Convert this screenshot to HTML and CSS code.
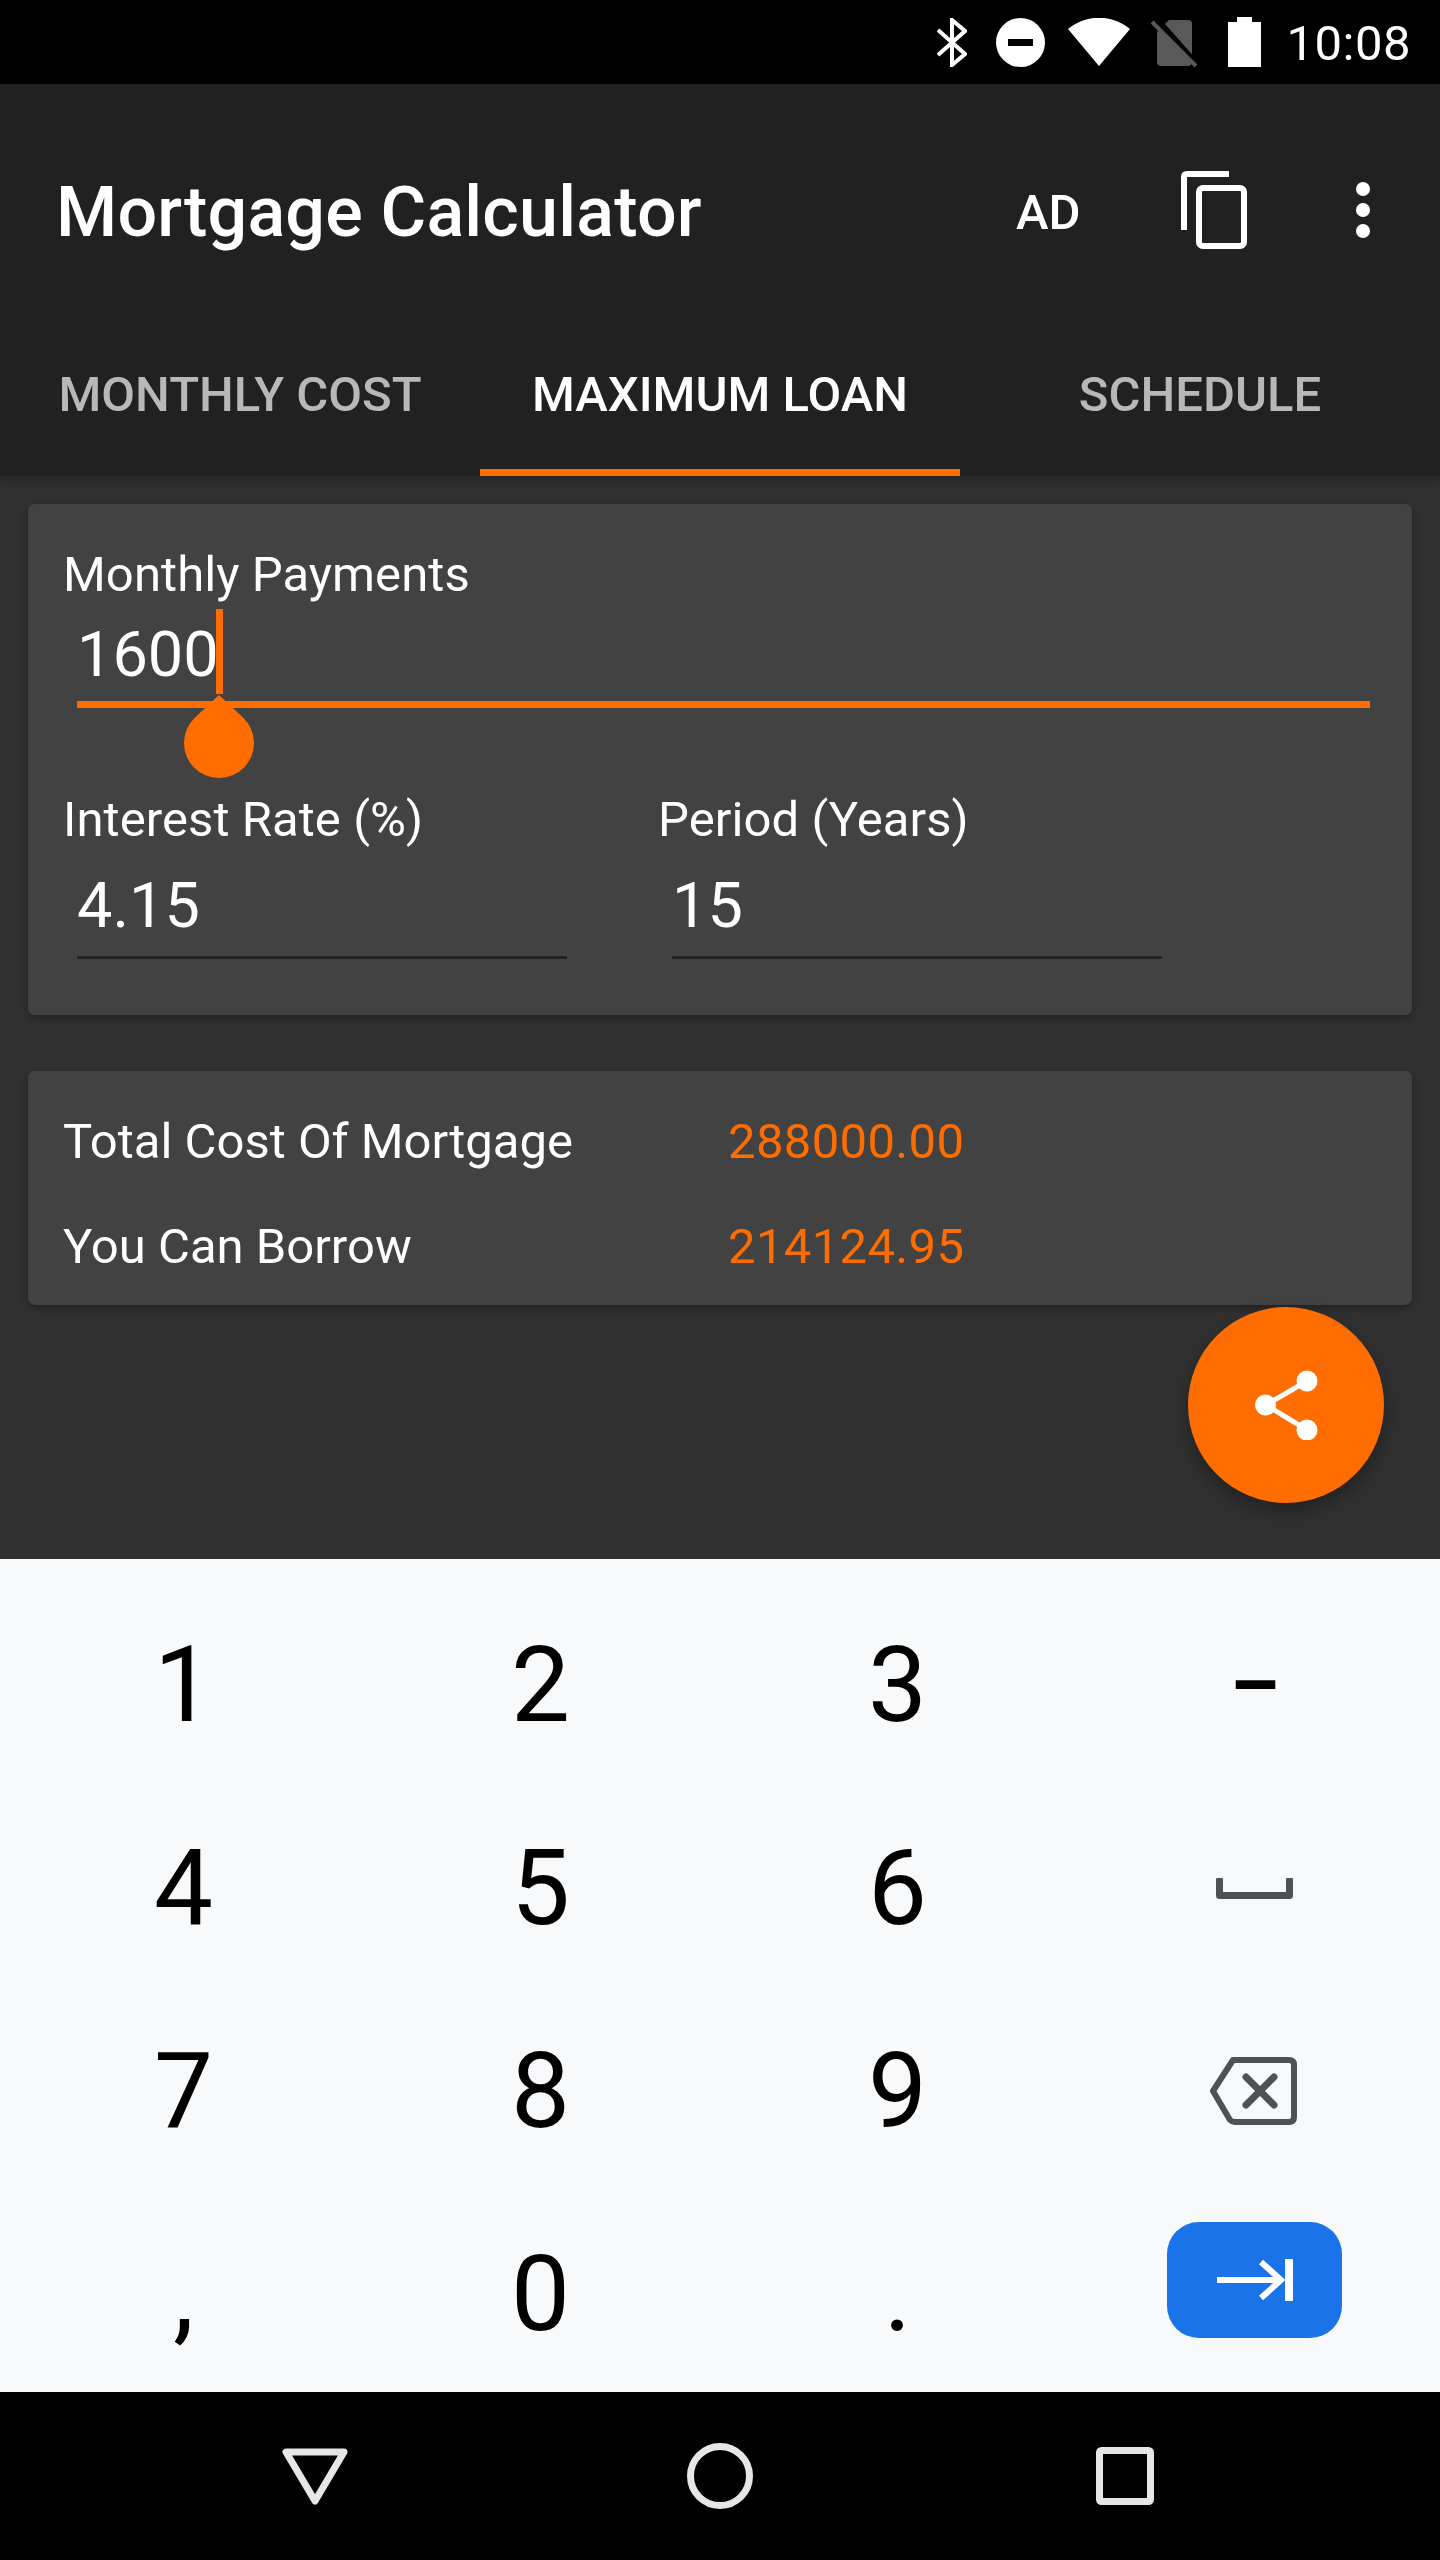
FILE: index.html
```html
<!DOCTYPE html>
<html lang="en">
<head>
<meta charset="utf-8">
<title>Mortgage Calculator</title>
<link rel="stylesheet" href="styles.css">
</head>
<body>
<div class="screen">
  <header class="status">
    <svg class="st-bt" width="30" height="49" viewBox="0 0 30 49"><path d="M1 12 L28 36 L15 47 V2 L28 13 L1 37" fill="none" stroke="#fff" stroke-width="4"/></svg>
    <svg class="st-dnd" width="49" height="49" viewBox="0 0 49 49"><circle cx="24.5" cy="24.5" r="24.5" fill="#fff"/><rect x="12" y="21" width="25" height="7" fill="#000"/></svg>
    <svg class="st-wifi" width="62" height="48" viewBox="0 0 62 48"><path d="M0 11 C18 -4 44 -4 62 11 L31 48 Z" fill="#fff"/></svg>
    <svg class="st-sim" width="46" height="48" viewBox="0 0 46 48"><path d="M18 1 H37 Q41 1 41 5 V43 Q41 47 37 47 H10 Q6 47 6 43 V13 Z" fill="#595959"/><path d="M4 -1 L44 44" stroke="#000" stroke-width="7"/><path d="M1 3 L45 47" stroke="#595959" stroke-width="4"/></svg>
    <svg class="st-bat" width="33" height="50" viewBox="0 0 33 50"><path d="M9 0 H24 V5 H33 V50 H0 V5 H9 Z" fill="#fff"/></svg>
    <span class="clock">10:08</span>
  </header>

  <div class="appbar">
    <div class="toolbar">
      <h1 class="title">Mortgage Calculator</h1>
      <span class="ad">AD</span>
      <svg class="copy" width="66" height="78" viewBox="0 0 66 78"><path d="M48 3 H6 Q3 3 3 6 V59" fill="none" stroke="#fff" stroke-width="6"/><rect x="18" y="17" width="45" height="58" rx="4" fill="none" stroke="#fff" stroke-width="6"/></svg>
      <svg class="more" width="14" height="56" viewBox="0 0 14 56"><circle cx="7" cy="7" r="7" fill="#fff"/><circle cx="7" cy="28" r="7" fill="#fff"/><circle cx="7" cy="49" r="7" fill="#fff"/></svg>
    </div>
    <nav class="tabs">
      <span class="tab">MONTHLY COST</span>
      <span class="tab tab-on">MAXIMUM LOAN</span>
      <span class="tab">SCHEDULE</span>
    </nav>
  </div>

  <main class="main">
    <section class="card card-form">
      <div class="field">
        <div class="label">Monthly Payments</div>
        <div class="value value-main">1600<i class="caret"></i></div>
        <div class="rule rule-on"></div>
        <svg class="handle" width="70" height="83" viewBox="0 0 70 83"><path d="M35 0 L59 22.5 A35 35 0 1 1 11 22.5 Z" fill="#ff6d00"/></svg>
      </div>
      <div class="pair">
        <div class="field">
          <div class="label">Interest Rate (%)</div>
          <div class="value value-sub">4.15</div>
          <div class="rule"></div>
        </div>
        <div class="field">
          <div class="label">Period (Years)</div>
          <div class="value value-sub">15</div>
          <div class="rule"></div>
        </div>
      </div>
    </section>
    <section class="card card-result">
      <div class="row"><span class="row-name">Total Cost Of Mortgage</span><span class="row-val">288000.00</span></div>
      <div class="row"><span class="row-name">You Can Borrow</span><span class="row-val">214124.95</span></div>
    </section>
    <button class="fab" type="button" aria-label="Share">
      <svg width="63" height="70" viewBox="0 0 63 70"><path d="M52 11 L11 35 L52 60" fill="none" stroke="#fff" stroke-width="5"/><circle cx="52" cy="11" r="10.5" fill="#fff"/><circle cx="10.5" cy="35" r="10.5" fill="#fff"/><circle cx="52" cy="60" r="10.5" fill="#fff"/></svg>
    </button>
  </main>

  <section class="keyboard">
    <span class="key">1</span><span class="key">2</span><span class="key">3</span><span class="key key-minus">–</span>
    <span class="key">4</span><span class="key">5</span><span class="key">6</span>
    <span class="key"><svg width="77" height="21" viewBox="0 0 77 21"><path d="M3.5 2 V17.5 H73.5 V2" fill="none" stroke="#4f5153" stroke-width="7" stroke-linejoin="round" stroke-linecap="round"/></svg></span>
    <span class="key">7</span><span class="key">8</span><span class="key">9</span>
    <span class="key"><svg class="bksp" width="88" height="70" viewBox="0 0 88 70"><path d="M24 4 H80 Q85 4 85 9 V61 Q85 66 80 66 H26 Q23 66 21 64 L4 35 Z" fill="none" stroke="#4f5153" stroke-width="6" stroke-linejoin="round"/><path d="M37 21 L65 49 M65 21 L37 49" stroke="#4f5153" stroke-width="7" stroke-linecap="round"/></svg></span>
    <span class="key">,</span><span class="key">0</span><span class="key">.</span>
    <span class="key"><span class="enter"><svg width="76" height="42" viewBox="0 0 76 42"><path d="M0 21 H62 M44 3 L64 21 L44 39" fill="none" stroke="#fff" stroke-width="6"/><rect x="68" y="0" width="8" height="42" fill="#fff"/></svg></span></span>
  </section>

  <footer class="navbar">
    <svg width="66" height="57" viewBox="0 0 66 57"><path d="M4 4 H62 L33 53 Z" fill="none" stroke="#e6e6e6" stroke-width="7" stroke-linejoin="round"/></svg>
    <svg width="66" height="66" viewBox="0 0 66 66"><circle cx="33" cy="33" r="29.5" fill="none" stroke="#e6e6e6" stroke-width="7"/></svg>
    <svg class="nav-rec" width="58" height="58" viewBox="0 0 58 58"><rect x="3.5" y="3.5" width="51" height="51" rx="2" fill="none" stroke="#e6e6e6" stroke-width="7"/></svg>
  </footer>
</div>
</body>
</html>
```

FILE: styles.css
```css
* { box-sizing: border-box; }
html, body { margin: 0; padding: 0; }
body { background: #000; font-family: Roboto, "Noto Sans", sans-serif; color: #fff; }
.screen { width: 1440px; height: 2560px; display: flex; flex-direction: column; overflow: hidden; }

.status { height: 84px; flex: none; background: #000; display: flex; align-items: center; padding-right: 29px; justify-content: flex-end; }
.st-bt { margin-right: 29px; margin-top: 1px; }
.st-dnd { margin-right: 23px; margin-top: 1px; }
.st-wifi { margin-right: 21px; }
.st-sim { margin-right: 31px; margin-top: 1px; }
.st-bat { margin-right: 25px; margin-top: -1px; }
.clock { font-size: 49px; line-height: 84px; margin-top: 4px; letter-spacing: .5px; }

.appbar { height: 392px; flex: none; background: #212121; display: flex; flex-direction: column; position: relative; z-index: 2; box-shadow: 0 4px 12px rgba(0,0,0,.25); }
.toolbar { height: 224px; padding-top: 32px; display: flex; align-items: center; }
.title { margin: 0 0 0 56px; font-size: 70px; font-weight: 500; flex: 1; line-height: 1; letter-spacing: .2px; }
.ad { font-size: 49px; font-weight: 500; width: 63px; margin-right: 102px; }
.copy { margin-right: 109px; margin-top: -4px; }
.more { margin-right: 70px; margin-top: -4px; }
.tabs { height: 168px; display: flex; }
.tab { flex: 1; display: flex; align-items: center; justify-content: center; font-size: 49px; font-weight: 500; color: #b8b8b8; padding-top: 5px; }
.tab-on { color: #fff; border-bottom: 7px solid #ff6d00; padding-top: 12px; }

.main { height: 1083px; flex: none; background: #303030; padding: 28px 28px 0; position: relative; display: flex; flex-direction: column; gap: 56px; }
.card { background: #424242; border-radius: 7px; box-shadow: 0 3px 7px rgba(0,0,0,.3); }
.card-form { height: 511px; padding: 42px 0 0 35px; }
.field { position: relative; }
.label { font-size: 49px; line-height: 58px; letter-spacing: .08px; }
.value { font-size: 63px; padding-left: 14px; }
.value-main { height: 97px; line-height: 102px; position: relative; }
.value-sub { height: 107px; line-height: 114px; }
.caret { position: absolute; left: 153px; top: 5px; width: 7px; height: 85px; background: #ff6d00; }
.rule { margin-left: 14px; width: 490px; height: 3px; background: #232323; }
.rule-on { width: 1293px; height: 7px; background: #ff6d00; }
.handle { position: absolute; left: 121px; top: 149px; }
.pair { display: grid; grid-template-columns: 595px 595px; margin-top: 83px; }

.card-result { height: 234px; padding: 18px 0 0 35px; }
.row { display: flex; height: 105px; align-items: center; font-size: 49px; }
.row-name { width: 665px; }
.row-val { color: #ff6d00; letter-spacing: .35px; }

.fab { position: absolute; right: 56px; bottom: 56px; width: 196px; height: 196px; border: 0; border-radius: 50%; background: #ff6d00; padding: 0; display: flex; align-items: center; justify-content: center; box-shadow: 0 8px 18px rgba(0,0,0,.3); }

.keyboard { height: 833px; flex: none; background: #f8f9fb; color: #000; padding: 22px 5px 0; display: grid; grid-template-columns: repeat(4, 357px); grid-auto-rows: 203px; }
.key { display: flex; align-items: center; justify-content: center; font-size: 105px; line-height: 1; padding-top: 6px; }
.key-minus { font-size: 78px; font-weight: 700; }
.bksp { margin-right: 3px; margin-bottom: 2px; }
.enter { width: 175px; height: 116px; border-radius: 32px; background: #1a73e8; display: flex; align-items: center; justify-content: center; margin-bottom: 29px; }

.navbar { height: 168px; flex: none; background: #000; display: flex; align-items: center; justify-content: center; gap: 339px; position: relative; padding-right: 4px; }
.nav-rec { margin-left: 4px; }
```
